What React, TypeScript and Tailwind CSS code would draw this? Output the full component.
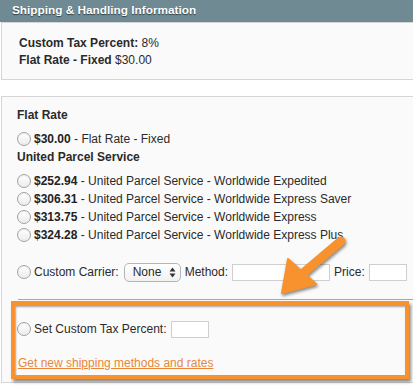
import React from 'react'

function Radio() {
  return (
    <span className="inline-block w-[14px] h-[14px] shrink-0 rounded-full border border-[#a3a3a3] bg-gradient-to-b from-white to-[#ececec] shadow-[inset_0_1px_1px_rgba(0,0,0,0.08)]" />
  )
}

function RateRow({ price, label }: { price: string; label: string }) {
  return (
    <div className="flex items-center h-[18px] gap-[3px]">
      <Radio />
      <span>
        <b className="font-bold text-[#222]">{price}</b> - {label}
      </span>
    </div>
  )
}

function Arrow() {
  return (
    <svg
      className="absolute left-0 top-0 pointer-events-none drop-shadow-[1px_2px_1.5px_rgba(0,0,0,0.45)]"
      width="413"
      height="391"
      viewBox="0 0 413 391"
    >
      <line x1="341" y1="241" x2="302" y2="274" stroke="#f7922e" strokeWidth="9" strokeLinecap="round" />
      <polygon points="282,293 288,259 316,284" fill="#f7922e" stroke="#f7922e" strokeWidth="2" strokeLinejoin="round" />
    </svg>
  )
}

export default function App() {
  return (
    <div className="relative w-[413px] h-[391px] overflow-hidden bg-white text-[12px] text-[#2a2a2a] font-['Liberation_Sans',Arial,sans-serif]">
      {/* header */}
      <div className="h-[22px] bg-[#6f8a93] pl-3 flex items-center text-[11.8px] font-bold text-white [text-shadow:0_1px_1px_rgba(0,0,0,0.55)]">
        Shipping &amp; Handling Information
      </div>

      {/* summary */}
      <div className="ml-px w-[420px] h-[58px] border border-[#d6d6d6] bg-[#fafafa] pl-[17px] pt-[12px] leading-[17px]">
        <div>
          <b className="font-bold">Custom Tax Percent:</b> 8%
        </div>
        <div>
          <b className="font-bold">Flat Rate - Fixed</b> $30.00
        </div>
      </div>

      {/* methods */}
      <div className="ml-px mt-[16px] w-[420px] border border-[#d6d6d6] bg-[#fafafa] pb-[3px]">
        <div className="pl-[15px] pt-[9px]">
          <div className="h-[18px] leading-[18px] font-bold">Flat Rate</div>
          <div className="mt-[6px]">
            <RateRow price="$30.00" label="Flat Rate - Fixed" />
          </div>
          <div className="h-[18px] leading-[18px] font-bold">United Parcel Service</div>
          <div className="mt-[6px]">
            <RateRow price="$252.94" label="United Parcel Service - Worldwide Expedited" />
            <RateRow price="$306.31" label="United Parcel Service - Worldwide Express Saver" />
            <RateRow price="$313.75" label="United Parcel Service - Worldwide Express" />
            <RateRow price="$324.28" label="United Parcel Service - Worldwide Express Plus" />
          </div>

          <div className="mt-[18px] h-[20px] flex items-center">
            <Radio />
            <span className="ml-[3px]">Custom Carrier:</span>
            <span className="ml-[5px] w-[57px] h-[19px] rounded-[5px] border border-[#b5b5b5] bg-gradient-to-b from-white to-[#f1f1f1] flex items-center pl-[8px] pr-[4px] justify-between">
              <span>None</span>
              <svg width="7" height="11" viewBox="0 0 7 11">
                <polygon points="3.5,0.5 6.5,4.5 0.5,4.5" fill="#333" />
                <polygon points="3.5,10.5 6.5,6.5 0.5,6.5" fill="#333" />
              </svg>
            </span>
            <span className="ml-[4px]">Method:</span>
            <span className="ml-[4px] w-[98px] h-[17px] border border-[#cfcfcf] bg-white" />
            <span className="ml-[4px]">Price:</span>
            <span className="ml-[4px] w-[38px] h-[17px] border border-[#cfcfcf] bg-white" />
          </div>

          <div className="mt-[17px] ml-px h-px bg-[#a6a6a6]" />
        </div>

        {/* highlighted */}
        <div className="ml-[9px] mt-px w-[398px] border-[4px] border-[#f7922e] shadow-[inset_1px_2px_2px_rgba(0,0,0,0.35),2px_3px_3px_rgba(0,0,0,0.45)] pl-[2px] pt-[14px] pb-[4px]">
          <div className="h-[20px] flex items-center">
            <Radio />
            <span className="ml-[3px]">Set Custom Tax Percent:</span>
            <span className="ml-[4px] w-[38px] h-[17px] border border-[#cfcfcf] bg-white" />
          </div>
          <div className="mt-[16px] pl-px h-[16px] leading-[16px]">
            <a className="underline text-[#e8873a] cursor-pointer">Get new shipping methods and rates</a>
          </div>
        </div>
      </div>

      <Arrow />
    </div>
  )
}
